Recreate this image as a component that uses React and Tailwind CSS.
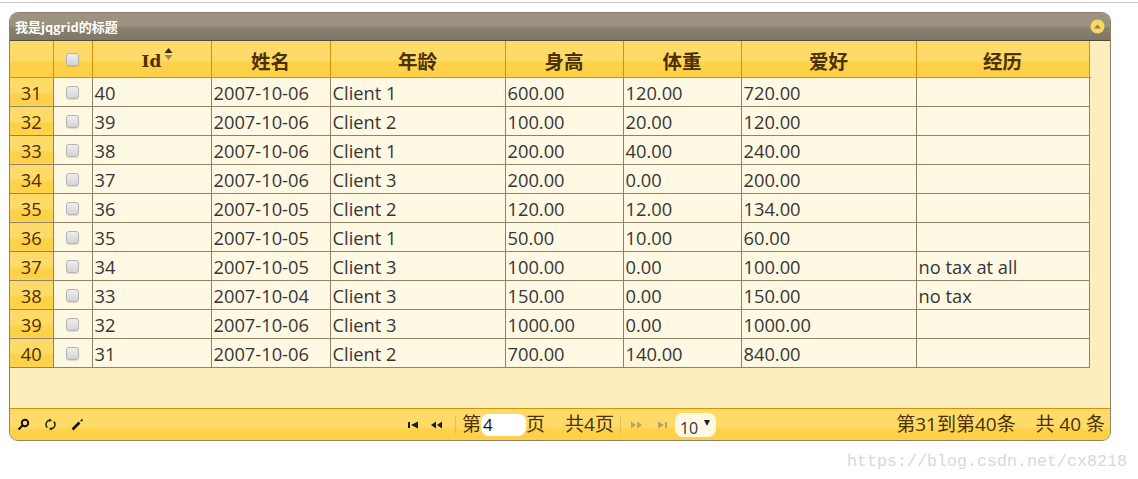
const rows = [
  [31, 40, "2007-10-06", "Client 1", "600.00", "120.00", "720.00", ""],
  [32, 39, "2007-10-06", "Client 2", "100.00", "20.00", "120.00", ""],
  [33, 38, "2007-10-06", "Client 1", "200.00", "40.00", "240.00", ""],
  [34, 37, "2007-10-06", "Client 3", "200.00", "0.00", "200.00", ""],
  [35, 36, "2007-10-05", "Client 2", "120.00", "12.00", "134.00", ""],
  [36, 35, "2007-10-05", "Client 1", "50.00", "10.00", "60.00", ""],
  [37, 34, "2007-10-05", "Client 3", "100.00", "0.00", "100.00", "no tax at all"],
  [38, 33, "2007-10-04", "Client 3", "150.00", "0.00", "150.00", "no tax"],
  [39, 32, "2007-10-06", "Client 3", "1000.00", "0.00", "1000.00", ""],
  [40, 31, "2007-10-06", "Client 2", "700.00", "140.00", "840.00", ""],
];
const headers = ["姓名", "年龄", "身高", "体重", "爱好", "经历"];
const widths = ["w-[43px]", "w-[39px]", "w-[119px]", "w-[119px]", "w-[175px]", "w-[118px]", "w-[118px]", "w-[175px]", "w-[173px]"];
const font = "font-['Open_Sans','Noto_Sans_CJK_SC',sans-serif]";

function Box() {
  return <span className="block h-[13px] w-[13px] rounded-[3px] border border-[#b4b4b4] bg-[linear-gradient(#eeeeee,#d4d4d4)] shadow-[0_1px_1px_rgba(0,0,0,0.12)]" />;
}

function Pg({ d, c = "#1c1c1c" }) {
  return <svg width="12" height="8" viewBox="0 0 12 8" fill={c}><path d={d} /></svg>;
}

export default function App() {
  return (
    <div className={`relative h-[479px] w-[1138px] overflow-hidden bg-white pt-[12px] ${font}`}>
      <div className="absolute inset-x-0 top-[2px] h-px bg-[#c8c8c8]" />
      <div className="ml-[9px] flex h-[429px] w-[1102px] flex-col overflow-hidden rounded-[9px] border border-[#8f8266] bg-[#feeebd]">
        <div className="flex h-[28px] shrink-0 items-center justify-between border-b border-[#4f4a3e] bg-[linear-gradient(#9c9382_0%,#9a917f_48%,#89816f_56%,#7f7766_100%)] pl-[5px] pr-[5px]">
          <span className="pt-[2px] text-[13px] font-bold text-white">我是jqgrid的标题</span>
          <svg width="15" height="15" viewBox="0 0 15 15">
            <circle cx="7.5" cy="7.5" r="7" fill="#fbd85d" />
            <path d="M4 9.5 7.500 5.500 11 9.500Z" fill="#8a7f68" />
          </svg>
        </div>
        <table className="w-[1080px] shrink-0 table-fixed border-collapse text-[18.300px] leading-none text-[#363636]">
          <colgroup>
            {widths.map((w, i) => <col key={i} className={w} />)}
          </colgroup>
          <thead>
            <tr className="h-[36px] bg-[linear-gradient(#fedb69_0%,#fedb69_52%,#fed148_62%,#fed148_100%)] text-[#4c3000]">
              <th className="border-r border-b border-[#d19405]" />
              <th className="border-r border-b border-[#d19405]">
                <span className="flex justify-center pt-[2px]"><Box /></span>
              </th>
              <th className="border-r border-b border-[#d19405] pl-[12px] pt-[2px] text-center font-bold">
                <span className="relative top-[1px] font-['DejaVu_Serif',serif] text-[17px]">Id</span>
                <svg width="9" height="14" viewBox="0 0 9 14" className="relative top-[-7px] ml-[3px] inline">
                  <path d="M4.500 1 8.500 6H.5Z" fill="#3a2c0a" />
                  <path d="M4.500 13 .5 8h8Z" fill="#9c8a50" />
                </svg>
              </th>
              {headers.map((h) => (
                <th key={h} className="border-r border-b border-[#d19405] pt-[5px] text-center text-[19.500px] font-bold">{h}</th>
              ))}
              <th className="border-b border-[#d19405]" />
            </tr>
          </thead>
          <tbody>
            {rows.map((r) => (
              <tr key={r[0]} className="h-[29px] bg-[#fff8e3]">
                <td className="border-r border-b border-[#8f8266] bg-[linear-gradient(#fedb69_0%,#fedb69_50%,#fed148_62%,#fed148_100%)] pt-[4px] text-center text-[#4c3000]">{r[0]}</td>
                <td className="border-r border-b border-[#8f8266]">
                  <span className="flex justify-center pt-[1px]"><Box /></span>
                </td>
                {r.slice(1).map((v, i) => (
                  <td key={i} className="overflow-hidden border-r border-b border-[#8f8266] pl-[2px] pt-[4px] whitespace-nowrap">{v}</td>
                ))}
                <td className="border-r-0 border-b-0 bg-[#feeebd]" />
              </tr>
            ))}
          </tbody>
        </table>
        <div className="flex-1" />
        <div className="flex h-[32px] shrink-0 items-center border-t border-[#d19405] bg-[linear-gradient(#fedb69_0%,#fedb69_55%,#fed148_70%,#fed148_100%)] text-[19px] text-[#4c3000]">
          <div className="flex w-[398px] items-center gap-[14px] pl-[7px]">
            <svg width="13" height="13" viewBox="0 0 13 13" fill="none" stroke="#111" strokeWidth="2">
              <circle cx="8" cy="5" r="3.200" />
              <path d="M5.500 7.500 1.500 11.500" />
            </svg>
            <svg width="13" height="13" viewBox="0 0 13 13" fill="none" stroke="#222" strokeWidth="1.400">
              <path d="M3.200 9.500A4.300 4.300 0 0 1 6.500 2.200M9.800 3.500A4.300 4.300 0 0 1 6.500 10.800" />
              <path d="M5.500 .4 8 2.200 5.500 4ZM7.500 9 5 10.800 7.500 12.600Z" fill="#222" stroke="none" />
            </svg>
            <svg width="13" height="13" viewBox="0 0 13 13" fill="none" stroke="#111">
              <path d="M1.500 11.500 8.500 4.500" strokeWidth="2.600" />
              <path d="M9.800 3.200 11.500 1.500" strokeWidth="1.600" />
            </svg>
          </div>
          <div className="flex items-center">
            <span className="flex gap-[11px]">
              <Pg d="M0 1h2v6H0zM3 4l7-3.500V7.500Z" />
              <Pg d="M0 4l5-3.500V7.500ZM6 4l5-3.500V7.500Z" />
            </span>
            <span className="ml-[12px] h-[18px] w-px bg-[#e0c05c]" />
            <span className="ml-[6px]">第</span>
            <span className="flex h-[22px] w-[45px] items-center rounded-[8px] bg-white pl-[2px] text-[17px] text-[#111]">4</span>
            <span>页</span>
            <span className="ml-[20px]">共4页</span>
            <span className="ml-[6px] h-[18px] w-px bg-[#e0c05c]" />
            <span className="ml-[10px] flex gap-[14px]">
              <Pg d="M0 .5 5 4 0 7.500ZM6 .5 11 4 6 7.500Z" c="#b5a36a" />
              <Pg d="M1 .5 7 4 1 7.500ZM8 1h2v6H8z" c="#b5a36a" />
            </span>
            <span className="relative ml-[6px] flex h-[24px] w-[41px] rounded-[8px] bg-[#fff8e3] pl-[5px] pt-[6px] text-[16px] leading-[18px] text-[#363636]">
              10
              <span className="absolute right-[6px] top-[7px] h-0 w-0 border-x-[3.500px] border-t-[6px] border-x-transparent border-t-[#222]" />
            </span>
          </div>
          <span className="ml-auto whitespace-pre pr-[5px]">第31到第40条    共 40 条</span>
        </div>
      </div>
      <div className="absolute left-[847px] top-[449px] font-['Liberation_Mono',monospace] text-[16.670px] text-[#d8d8d8]">https://blog.csdn.net/cx8218</div>
    </div>
  );
}
